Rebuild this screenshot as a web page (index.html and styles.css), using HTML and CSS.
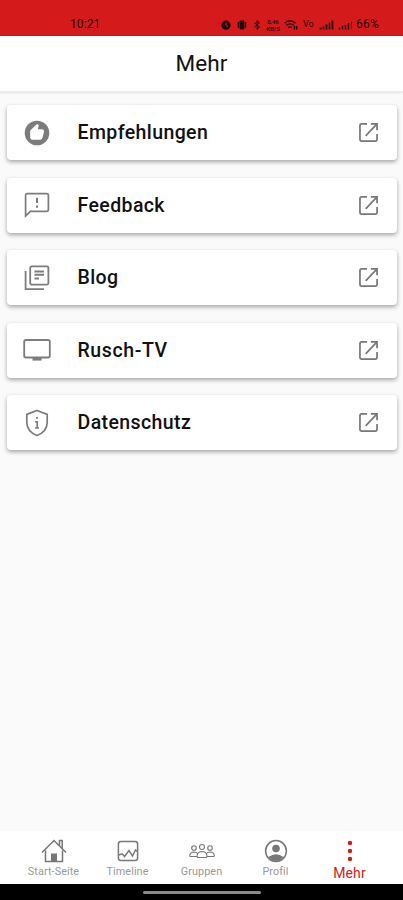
FILE: index.html
```html
<!DOCTYPE html>
<html lang="de">
<head>
    <meta charset="UTF-8">
    <meta name="viewport" content="width=device-width, initial-scale=1.0">
    <title>Mehr</title>
    <link rel="stylesheet" href="styles.css">
</head>
<body>
    <!-- Link icon shared by all cards -->
    <svg class="symbols">
        <symbol id="open" viewBox="0 0 20 20">
            <path d="M8.5 1H2.8Q1 1 1 2.8V17.2Q1 19 2.8 19H17.2Q19 19 19 17.2V11.5M12.5 1H19V7.5M19 1L7 13.5" fill="none" stroke="currentColor" stroke-width="1.8"/>
        </symbol>
    </svg>

    <div class="app">
        <div class="statusbar">
            <span class="time">10:21</span>
            <div class="status-icons">
                <svg class="alarm" viewBox="0 0 10 10"><circle cx="5" cy="5.2" r="4.6"/><path d="M5 2.8V5.4L7 6.6" fill="none" stroke="#d51a1b"/></svg>
                <svg class="vibrate" viewBox="0 0 10 10"><rect x="2.5" y="0.5" width="5" height="9" rx="1"/><path d="M1.3 2V8M8.7 2V8" stroke="#26090a" stroke-width="1.2"/></svg>
                <svg class="bluetooth" viewBox="0 0 8 10"><path d="M1.2 2.6L6.5 7.2L4 9.4V.6L6.5 2.8L1.2 7.4" fill="none" stroke="#26090a"/></svg>
                <div class="speed"><span>0,46</span><span>KB/S</span></div>
                <svg class="wifi" viewBox="0 0 14 10"><path d="M.5 3.2Q6 -1.6 11.5 3.2M2.3 5.4Q6 2.4 9.7 5.4M4.3 7.6Q6 6.2 7.7 7.6M10.5 6V9.5M12.7 6V9.5" fill="none" stroke="#26090a" stroke-width="1.4"/></svg>
                <span class="volte">Vo</span>
                <svg class="signal" viewBox="0 0 15 10"><path d="M1.5 7.5V9.5M4.5 6.5V9.5M7.5 4.5V9.5M10.5 2.5V9.5M13.5 .5V9.5" stroke="#26090a" stroke-width="1.7"/></svg>
                <svg class="signal" viewBox="0 0 15 10"><path d="M1.5 7.5V9.5M4.5 6V9.5M7.5 5V9.5M10.5 3V9.5" stroke="#26090a" stroke-width="1.5"/><path d="M13.5 1.5V9.5" stroke="#8a1213" stroke-width="1.2"/></svg>
                <span class="battery">66%</span>
            </div>
        </div>

        <header>
            <h1>Mehr</h1>
        </header>

        <main>
            <a class="card">
                <svg class="icon" viewBox="0 0 28 28"><circle cx="14" cy="14" r="12.3" fill="currentColor"/><path d="M7.2 11.5L14 5L15.8 6.3L14.8 10.2H19.4Q21.3 10.4 21 12.8L19.4 19Q18.9 20.8 17.4 20.8H9.4Q7.2 20.8 7.2 18.4Z" fill="#fff"/></svg>
                <span class="title">Empfehlungen</span>
                <svg class="open"><use href="#open"/></svg>
            </a>
            <a class="card">
                <svg class="icon" viewBox="0 0 28 28"><path d="M2.6 25V4.3Q2.6 2.6 4.3 2.6H23.7Q25.4 2.6 25.4 4.3V18.6Q25.4 20.3 23.7 20.3H7.3Z" fill="none" stroke="currentColor" stroke-width="1.7"/><path d="M14 6.8V12M14 14.5V16.7" stroke="currentColor" stroke-width="2"/></svg>
                <span class="title">Feedback</span>
                <svg class="open"><use href="#open"/></svg>
            </a>
            <a class="card">
                <svg class="icon" viewBox="0 0 28 28"><rect x="7.2" y="2.4" width="18.2" height="18.2" rx="1.5" fill="none" stroke="currentColor" stroke-width="1.8"/><path d="M2.6 7V25.2H21" fill="none" stroke="currentColor" stroke-width="1.8"/><path d="M11.5 7.5H21M11.5 10.8H21M11.5 14.5H16" stroke="currentColor" stroke-width="2"/></svg>
                <span class="title">Blog</span>
                <svg class="open"><use href="#open"/></svg>
            </a>
            <a class="card">
                <svg class="icon" viewBox="0 0 28 28"><rect x="1.2" y="4" width="25.6" height="17.5" rx="1.8" fill="none" stroke="currentColor" stroke-width="1.8"/><path d="M9.5 22H18.5V24.6H9.5Z" fill="currentColor"/></svg>
                <span class="title wide">Rusch-TV</span>
                <svg class="open"><use href="#open"/></svg>
            </a>
            <a class="card">
                <svg class="icon" viewBox="0 0 28 28"><path d="M14 1.5L24.2 5.4V13.2Q24.2 22.4 14 26.5Q3.8 22.4 3.8 13.2V5.4Z" fill="none" stroke="currentColor" stroke-width="1.7"/><path d="M13 8.9H15M12.2 12.8H14.2V19M12 19H16" fill="none" stroke="currentColor" stroke-width="1.7"/></svg>
                <span class="title">Datenschutz</span>
                <svg class="open"><use href="#open"/></svg>
            </a>
        </main>

        <nav>
            <a class="tab">
                <svg viewBox="0 0 26 24"><path d="M1 13.5L13 1.5L25 13.5M4.5 11.5V22.5H21.5V11.5M18.5 6.5V1.5H21.2V9.3" fill="none" stroke="currentColor" stroke-width="1.5"/><path d="M10 14.5H16V22.5H10Z" fill="currentColor"/></svg>
                <span>Start-Seite</span>
            </a>
            <a class="tab">
                <svg viewBox="0 0 26 24"><rect x="3.4" y="2.5" width="19.2" height="19" rx="2.5" fill="none" stroke="currentColor" stroke-width="1.5"/><path d="M4 16L7.2 14.8L9.5 17.5L14 11.5L17.5 17L20.5 11L22 12.5" fill="none" stroke="currentColor" stroke-width="1.5"/></svg>
                <span>Timeline</span>
            </a>
            <a class="tab">
                <svg viewBox="0 0 26 24"><g fill="none" stroke="currentColor" stroke-width="1.1"><circle cx="5" cy="9" r="2.3"/><circle cx="13" cy="8" r="2.5"/><circle cx="21" cy="9" r="2.3"/><path d="M.8 17.5V16Q1.2 13.2 5 13Q7.5 13 8.6 14.7M17.4 14.7Q18.5 13 21 13Q24.8 13.2 25.2 16V17.5M8.2 18.5V16Q8.8 12.6 13 12.5Q17.2 12.6 17.8 16V18.5M.8 17.5H8M18 17.5H25.2M8.2 18.5H17.8"/></g></svg>
                <span>Gruppen</span>
            </a>
            <a class="tab">
                <svg viewBox="0 0 26 24"><circle cx="13" cy="12" r="10.4" fill="none" stroke="currentColor" stroke-width="1.5"/><circle cx="13" cy="9.5" r="3.8" fill="currentColor"/><path d="M5.5 18Q13 12.6 20.5 18Q17 22 13 22Q9 22 5.5 18Z" fill="currentColor"/></svg>
                <span>Profil</span>
            </a>
            <a class="tab active">
                <svg viewBox="0 0 26 24"><g fill="currentColor"><circle cx="13" cy="4" r="2.2"/><circle cx="13" cy="12" r="2.2"/><circle cx="13" cy="20" r="2.2"/></g></svg>
                <span>Mehr</span>
            </a>
        </nav>

        <div class="homebar"><div></div></div>
    </div>
</body>
</html>
```
FILE: styles.css
```css
* {
    box-sizing: border-box;
}
body {
    margin: 0;
    background-color: #fafafa;
    font-family: Roboto, "Liberation Sans", sans-serif;
    color: #111;
}
.symbols {
    display: none;
}
.app {
    display: flex;
    flex-direction: column;
    height: 900px;
}
.statusbar {
    display: flex;
    justify-content: space-between;
    height: 36px;
    padding: 13px 22px 0 70px;
    background-color: #d51a1b;
    border-bottom: 1px solid #c01516;
    color: #26090a;
    font-size: 12px;
    line-height: 23px;
}
.time {
    letter-spacing: 0.1px;
}
.status-icons {
    display: flex;
    align-items: center;
    width: 160px;
    height: 23px;
    fill: #26090a;
}
.alarm,
.vibrate {
    width: 10px;
    height: 10px;
    margin-right: 6px;
}
.bluetooth {
    width: 8px;
    height: 10px;
    margin-right: 4px;
}
.speed {
    display: flex;
    flex-direction: column;
    align-items: center;
    width: 16px;
    margin-right: 3px;
    font-size: 6px;
    font-weight: 500;
    line-height: 7px;
}
.wifi {
    width: 14px;
    height: 10px;
    margin-right: 5px;
}
.volte {
    width: 12px;
    margin-right: 4px;
    font-size: 9px;
}
.signal {
    width: 15px;
    height: 10px;
    margin-right: 3.5px;
}
.battery {
    letter-spacing: 0.3px;
}
header {
    height: 56px;
    background-color: #fff;
    border-bottom: 1px solid #ededed;
    box-shadow: 0 1px 2px rgba(0, 0, 0, 0.1);
}
h1 {
    margin: 0;
    font-size: 22.5px;
    font-weight: 400;
    line-height: 55px;
    letter-spacing: 0.1px;
    text-align: center;
    color: #111;
}
main {
    flex: 1;
    display: flex;
    flex-direction: column;
    gap: 17.5px;
    padding: 13px 6.5px 0 7px;
}
.card {
    display: flex;
    align-items: center;
    height: 55px;
    padding: 0 18.5px 0 16px;
    background-color: #fff;
    border-radius: 4px;
    box-shadow: 0 2px 4px rgba(0, 0, 0, 0.34);
}
.icon {
    width: 28px;
    height: 28px;
    color: #7c7c7c;
}
.title {
    flex: 1;
    margin-left: 26.5px;
    font-size: 19.5px;
    font-weight: 500;
    letter-spacing: 0.4px;
}
.title.wide {
    letter-spacing: 0.6px;
}
.open {
    width: 19px;
    height: 19px;
    color: #777;
}
nav {
    display: flex;
    height: 53px;
    padding: 0 16.5px;
    background-color: #fff;
}
.tab {
    flex: 1;
    display: flex;
    flex-direction: column;
    align-items: center;
    padding-top: 8px;
    font-size: 10.8px;
    line-height: 17px;
    letter-spacing: 0.1px;
    color: #999;
}
.tab svg {
    width: 26px;
    height: 24px;
    color: #777;
}
.tab.active,
.tab.active svg {
    color: #cf1c1c;
}
.tab.active span {
    font-size: 14px;
    line-height: 20px;
}
.homebar {
    height: 16px;
    padding-top: 6.5px;
    background-color: #000;
}
.homebar div {
    width: 118px;
    height: 3px;
    margin: 0 auto;
    border-radius: 2px;
    background-color: #8a8a8a;
}
```
